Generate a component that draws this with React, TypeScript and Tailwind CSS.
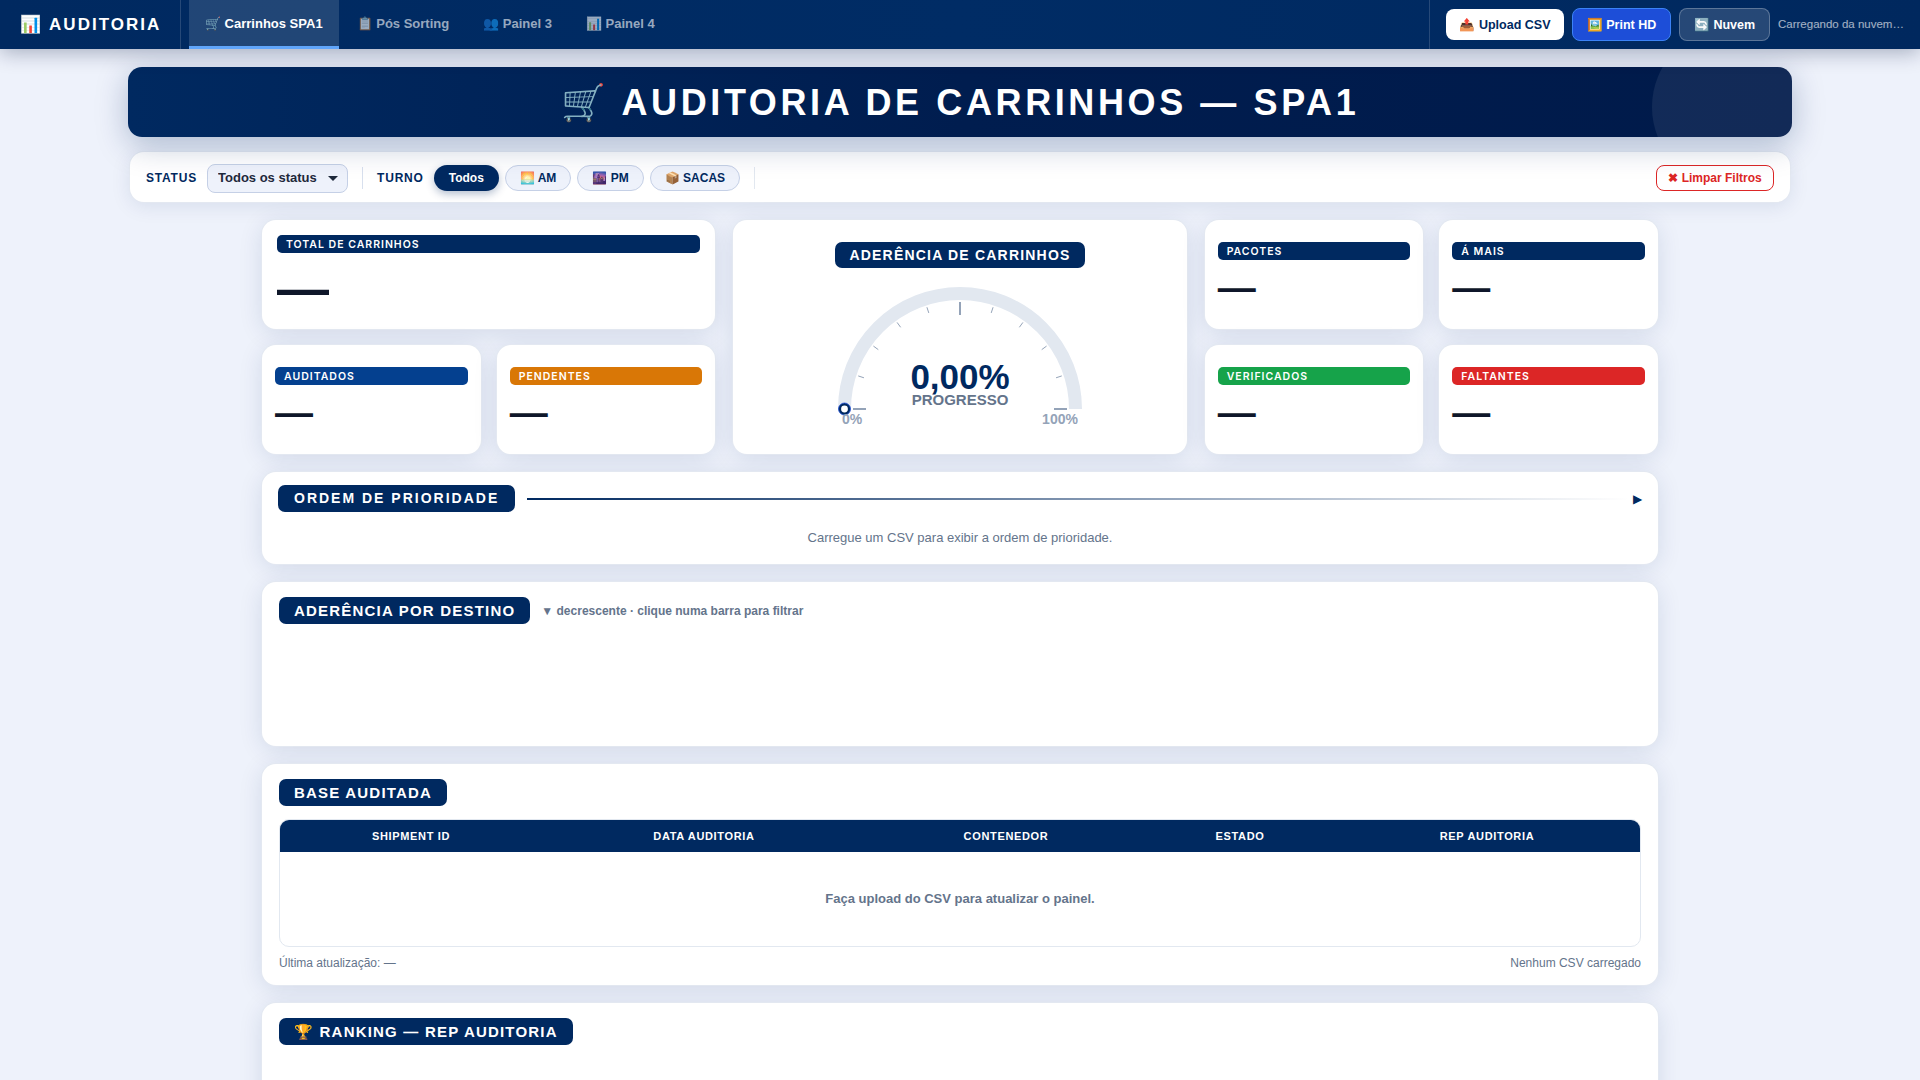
import React from "react";

const SANS = "font-['Liberation_Sans',Arial,sans-serif]";
const INTER = "font-['Inter','Liberation_Sans',sans-serif]";
const CARD =
  "bg-white rounded-[14px] shadow-[0_0_0_1px_#e3e8f1,0_4px_24px_rgba(0,41,96,0.12)]";

function Tab({ label, active }: { label: string; active?: boolean }) {
  return (
    <div
      className={
        active
          ? "h-full px-4 flex items-center text-[13px] font-bold text-white bg-white/[0.13] border-b-[3px] border-[#60a5fa] pt-[1px]"
          : "h-full px-4 flex items-center text-[13px] font-bold text-white/60 pb-[2px]"
      }
    >
      {label}
    </div>
  );
}

function Chip({ label, active }: { label: string; active?: boolean }) {
  return (
    <div
      className={
        active
          ? "h-[26px] px-[15px] rounded-full flex items-center text-[12px] font-bold text-white bg-[#002960] shadow-[0_3px_8px_rgba(0,41,96,0.3)]"
          : "h-[26px] px-[14px] rounded-full flex items-center text-[12px] font-bold text-[#002960] bg-[#eef2fb] border border-[#c5d0e6]"
      }
    >
      {label}
    </div>
  );
}

function Stat({
  label,
  color,
  big,
}: {
  label: string;
  color: string;
  big?: boolean;
}) {
  return (
    <div className={`${CARD} h-[109px] flex flex-col ${big ? "px-[15px] pt-[15px]" : "px-[13px] pt-[22px]"}`}>
      <div
        className={`${INTER} ${color} h-[18px] shrink-0 rounded-[5px] px-[9px] pt-[1px] flex items-center text-[10.5px] font-semibold tracking-[1px] text-white`}
      >
        {label}
      </div>
      <div
        className={`${SANS} text-[#0f172a] font-bold ${big ? "text-[52px] leading-[58px] mt-[6px]" : "text-[38px] leading-[45px] mt-[6px]"}`}
      >
        —
      </div>
    </div>
  );
}

function Pill({ children, wide }: { children: React.ReactNode; wide?: boolean }) {
  return (
    <div
      className={
        wide
          ? "bg-[#002960] text-white rounded-[7px] px-4 py-[5px] text-[14px] leading-[17px] font-bold tracking-[2px] whitespace-nowrap flex items-center"
          : "bg-[#002960] text-white rounded-[7px] px-[15px] py-[5px] text-[15px] leading-[17px] font-bold tracking-[1.2px] whitespace-nowrap flex items-center"
      }
    >
      {children}
    </div>
  );
}

function Gauge() {
  const cx = 130;
  const cy = 130;
  const ticks = [1, 2, 3, 4, 6, 7, 8, 9];
  return (
    <svg width="260" height="150" viewBox="0 0 260 150" className="mt-[11px]">
      <path d={`M ${cx - 115.5} ${cy} A 115.5 115.5 0 0 1 ${cx + 115.5} ${cy}`} fill="none" stroke="#e2e8f0" strokeWidth="13" />
      {ticks.map((t) => {
        const a = Math.PI - (t * Math.PI) / 10;
        return (
          <line
            key={t}
            x1={cx + 107 * Math.cos(a)}
            y1={cy - 107 * Math.sin(a)}
            x2={cx + 101 * Math.cos(a)}
            y2={cy - 101 * Math.sin(a)}
            stroke="#94a3b8"
            strokeWidth="1"
          />
        );
      })}
      <line x1={cx} y1={cy - 107} x2={cx} y2={cy - 94} stroke="#94a3b8" strokeWidth="2" />
      <line x1={cx - 107} y1={cy} x2={cx - 94} y2={cy} stroke="#94a3b8" strokeWidth="2" />
      <line x1={cx + 107} y1={cy} x2={cx + 94} y2={cy} stroke="#94a3b8" strokeWidth="2" />
      <circle cx={cx - 115.5} cy={cy} r="4.7" fill="#fff" stroke="#002960" strokeWidth="2.6" />
      <circle cx={cx - 115.5} cy={cy} r="6" fill="none" stroke="#1d4ed8" strokeWidth="0.8" />
      <text x={cx} y={cy - 20} textAnchor="middle" fontSize="35" fontWeight="700" fill="#002960" fontFamily="Liberation Sans">0,00%</text>
      <text x={cx} y={cy - 4} textAnchor="middle" fontSize="15" fontWeight="700" fill="#64748b" fontFamily="Liberation Sans">PROGRESSO</text>
      <text x={cx - 108} y={cy + 15} textAnchor="middle" fontSize="14" fontWeight="700" fill="#94a3b8" fontFamily="Liberation Sans">0%</text>
      <text x={cx + 100} y={cy + 15} textAnchor="middle" fontSize="14" fontWeight="700" fill="#94a3b8" fontFamily="Liberation Sans">100%</text>
    </svg>
  );
}

export default function App() {
  return (
    <div className={`${SANS} h-[1080px] overflow-hidden bg-[#eef2fb]`}>
      <nav className="relative z-20 h-[49px] bg-gradient-to-r from-[#002960] via-[#002c65] to-[#00285e] shadow-[0_4px_20px_rgba(0,20,60,0.3)] flex items-center">
        <div className="h-full w-[181px] pl-5 border-r border-white/15 flex items-center text-[17px] font-bold tracking-[2px] text-white whitespace-nowrap">
          📊 AUDITORIA
        </div>
        <div className="h-full flex gap-[2px] ml-2">
          <Tab label="🛒 Carrinhos SPA1" active />
          <Tab label="📋 Pós Sorting" />
          <Tab label="👥 Painel 3" />
          <Tab label="📊 Painel 4" />
        </div>
        <div className="h-full ml-auto w-[491px] pl-4 border-l border-white/15 flex items-center">
          <div className="h-[31px] w-[118px] pt-[1px] rounded-lg bg-white text-[#002960] text-[12.5px] font-bold flex items-center justify-center whitespace-nowrap">
            📤 Upload CSV
          </div>
          <div className="ml-2 h-[33px] w-[99px] pt-[1px] rounded-lg bg-[#1d4ed8] border border-[#3b82f6] text-white text-[12.5px] font-bold flex items-center justify-center whitespace-nowrap">
            🖼️ Print HD
          </div>
          <div className="ml-2 h-[33px] w-[91px] pt-[1px] rounded-lg bg-white/15 border border-white/25 text-white text-[12.5px] font-bold flex items-center justify-center whitespace-nowrap">
            🔄 Nuvem
          </div>
          <div className="ml-2 w-[126px] pt-[1px] truncate text-[11.5px] text-white/65">Carregando da nuvem…</div>
        </div>
      </nav>

      <header className="relative z-10 mx-[128px] mt-[18px] h-[70px] pt-[2px] rounded-[14px] overflow-hidden bg-gradient-to-r from-[#002960] via-[#001d4f] to-[#001a4a] shadow-[0_8px_32px_rgba(0,41,96,0.28)] flex items-center justify-center">
        <div className="absolute right-[-20px] top-[-40px] w-[160px] h-[160px] rounded-full bg-white/[0.07]" />
        <h1 className="text-[36px] font-bold tracking-[3.6px] text-white whitespace-nowrap">🛒 AUDITORIA DE CARRINHOS — SPA1</h1>
      </header>

      <div className="mx-[130px] mt-[15px] h-[50px] pt-[2px] rounded-[14px] bg-white shadow-[0_0_0_1px_#e3e8f1,0_4px_20px_rgba(0,41,96,0.1)] pl-4 pr-4 flex items-center">
        <span className="text-[12px] font-bold tracking-[0.8px] text-[#002960]">STATUS</span>
        <div className="relative ml-[10px]">
          <select className="block appearance-none h-[29px] w-[141px] rounded-lg bg-[#eef2fb] border-[1.5px] border-[#c5d0e6] pl-[10px] text-[13px] font-bold text-[#1e293b]">
            <option>Todos os status</option>
          </select>
          <svg width="10" height="5" viewBox="0 0 10 5" className="absolute right-[10px] top-[12px] pointer-events-none">
            <path d="M0 0 L10 0 L5 5 Z" fill="#1e293b" />
          </svg>
        </div>
        <div className="mx-[14px] w-px h-[22px] bg-[#d8e0ee]" />
        <span className="text-[12px] font-bold tracking-[0.8px] text-[#002960]">TURNO</span>
        <div className="ml-[10px] flex gap-[6px]">
          <Chip label="Todos" active />
          <Chip label="🌅 AM" />
          <Chip label="🌆 PM" />
          <Chip label="📦 SACAS" />
        </div>
        <div className="ml-[14px] w-px h-[22px] bg-[#e2e8f0]" />
        <div className="ml-auto h-[26px] w-[118px] rounded-lg border-[1.5px] border-[#dc2626] bg-white text-[#dc2626] text-[12px] font-bold flex items-center justify-center whitespace-nowrap">
          ✖ Limpar Filtros
        </div>
      </div>

      <main className="w-[1396px] mx-auto mt-[18px] flex flex-col gap-[18px]">
        <div className="grid grid-cols-3 gap-[18px]">
          <div className="grid grid-cols-2 gap-4">
            <div className="col-span-2">
              <Stat label="TOTAL DE CARRINHOS" color="bg-[#002960]" big />
            </div>
            <Stat label="AUDITADOS" color="bg-[#04408f]" />
            <Stat label="PENDENTES" color="bg-[#d97706]" />
          </div>
          <div className={`${CARD} h-[234px] pt-[22px] flex flex-col items-center`}>
            <div className="h-[26px] px-[14px] rounded-[7px] bg-[#002960] text-white text-[14px] font-bold tracking-[1.2px] flex items-center whitespace-nowrap">
              ADERÊNCIA DE CARRINHOS
            </div>
            <Gauge />
          </div>
          <div className="grid grid-cols-2 gap-4">
            <Stat label="PACOTES" color="bg-[#002960]" />
            <Stat label="Á MAIS" color="bg-[#002960]" />
            <Stat label="VERIFICADOS" color="bg-[#16a34a]" />
            <Stat label="FALTANTES" color="bg-[#dc2626]" />
          </div>
        </div>

        <section className={`${CARD} h-[92px] pt-[13px] px-4`}>
          <div className="flex items-center">
            <Pill wide>ORDEM DE PRIORIDADE</Pill>
            <div className="ml-3 flex-1 h-[2px] bg-gradient-to-r from-[#002960] to-transparent" />
            <span className="ml-1 text-[12px] text-[#002960]">▶</span>
          </div>
          <p className="mt-[16px] text-center text-[13px] text-[#64748b]">Carregue um CSV para exibir a ordem de prioridade.</p>
        </section>

        <section className={`${CARD} h-[164px] pt-[15px] px-[17px]`}>
          <div className="flex items-center">
            <Pill>ADERÊNCIA POR DESTINO</Pill>
            <span className="ml-[11px] text-[12px] font-bold text-[#64748b]">▼ decrescente · clique numa barra para filtrar</span>
          </div>
        </section>

        <section className={`${CARD} h-[221px] pt-[15px] px-[17px]`}>
          <div className="flex">
            <Pill>BASE AUDITADA</Pill>
          </div>
          <div className="mt-[13px] h-[128px] rounded-[10px] border border-[#e2e8f0] overflow-hidden">
            <table className="w-full table-fixed border-collapse">
              <colgroup>
                <col className="w-[262px]" />
                <col className="w-[324px]" />
                <col className="w-[280px]" />
                <col className="w-[188px]" />
                <col />
              </colgroup>
              <thead>
                <tr className="h-[32px] bg-[#002960] text-white text-[11px] font-bold tracking-[0.66px]">
                  <th>SHIPMENT ID</th>
                  <th>DATA AUDITORIA</th>
                  <th>CONTENEDOR</th>
                  <th>ESTADO</th>
                  <th>REP AUDITORIA</th>
                </tr>
              </thead>
              <tbody>
                <tr>
                  <td colSpan={5} className="h-[93px] text-center text-[13px] font-bold text-[#64748b]">
                    Faça upload do CSV para atualizar o painel.
                  </td>
                </tr>
              </tbody>
            </table>
          </div>
          <div className="mt-[7px] flex justify-between text-[12px] text-[#64748b]">
            <span>Última atualização: —</span>
            <span>Nenhum CSV carregado</span>
          </div>
        </section>

        <section className={`${CARD} h-[240px] pt-[15px] px-[17px]`}>
          <div className="flex">
            <Pill>🏆 RANKING — REP AUDITORIA</Pill>
          </div>
        </section>
      </main>
    </div>
  );
}
